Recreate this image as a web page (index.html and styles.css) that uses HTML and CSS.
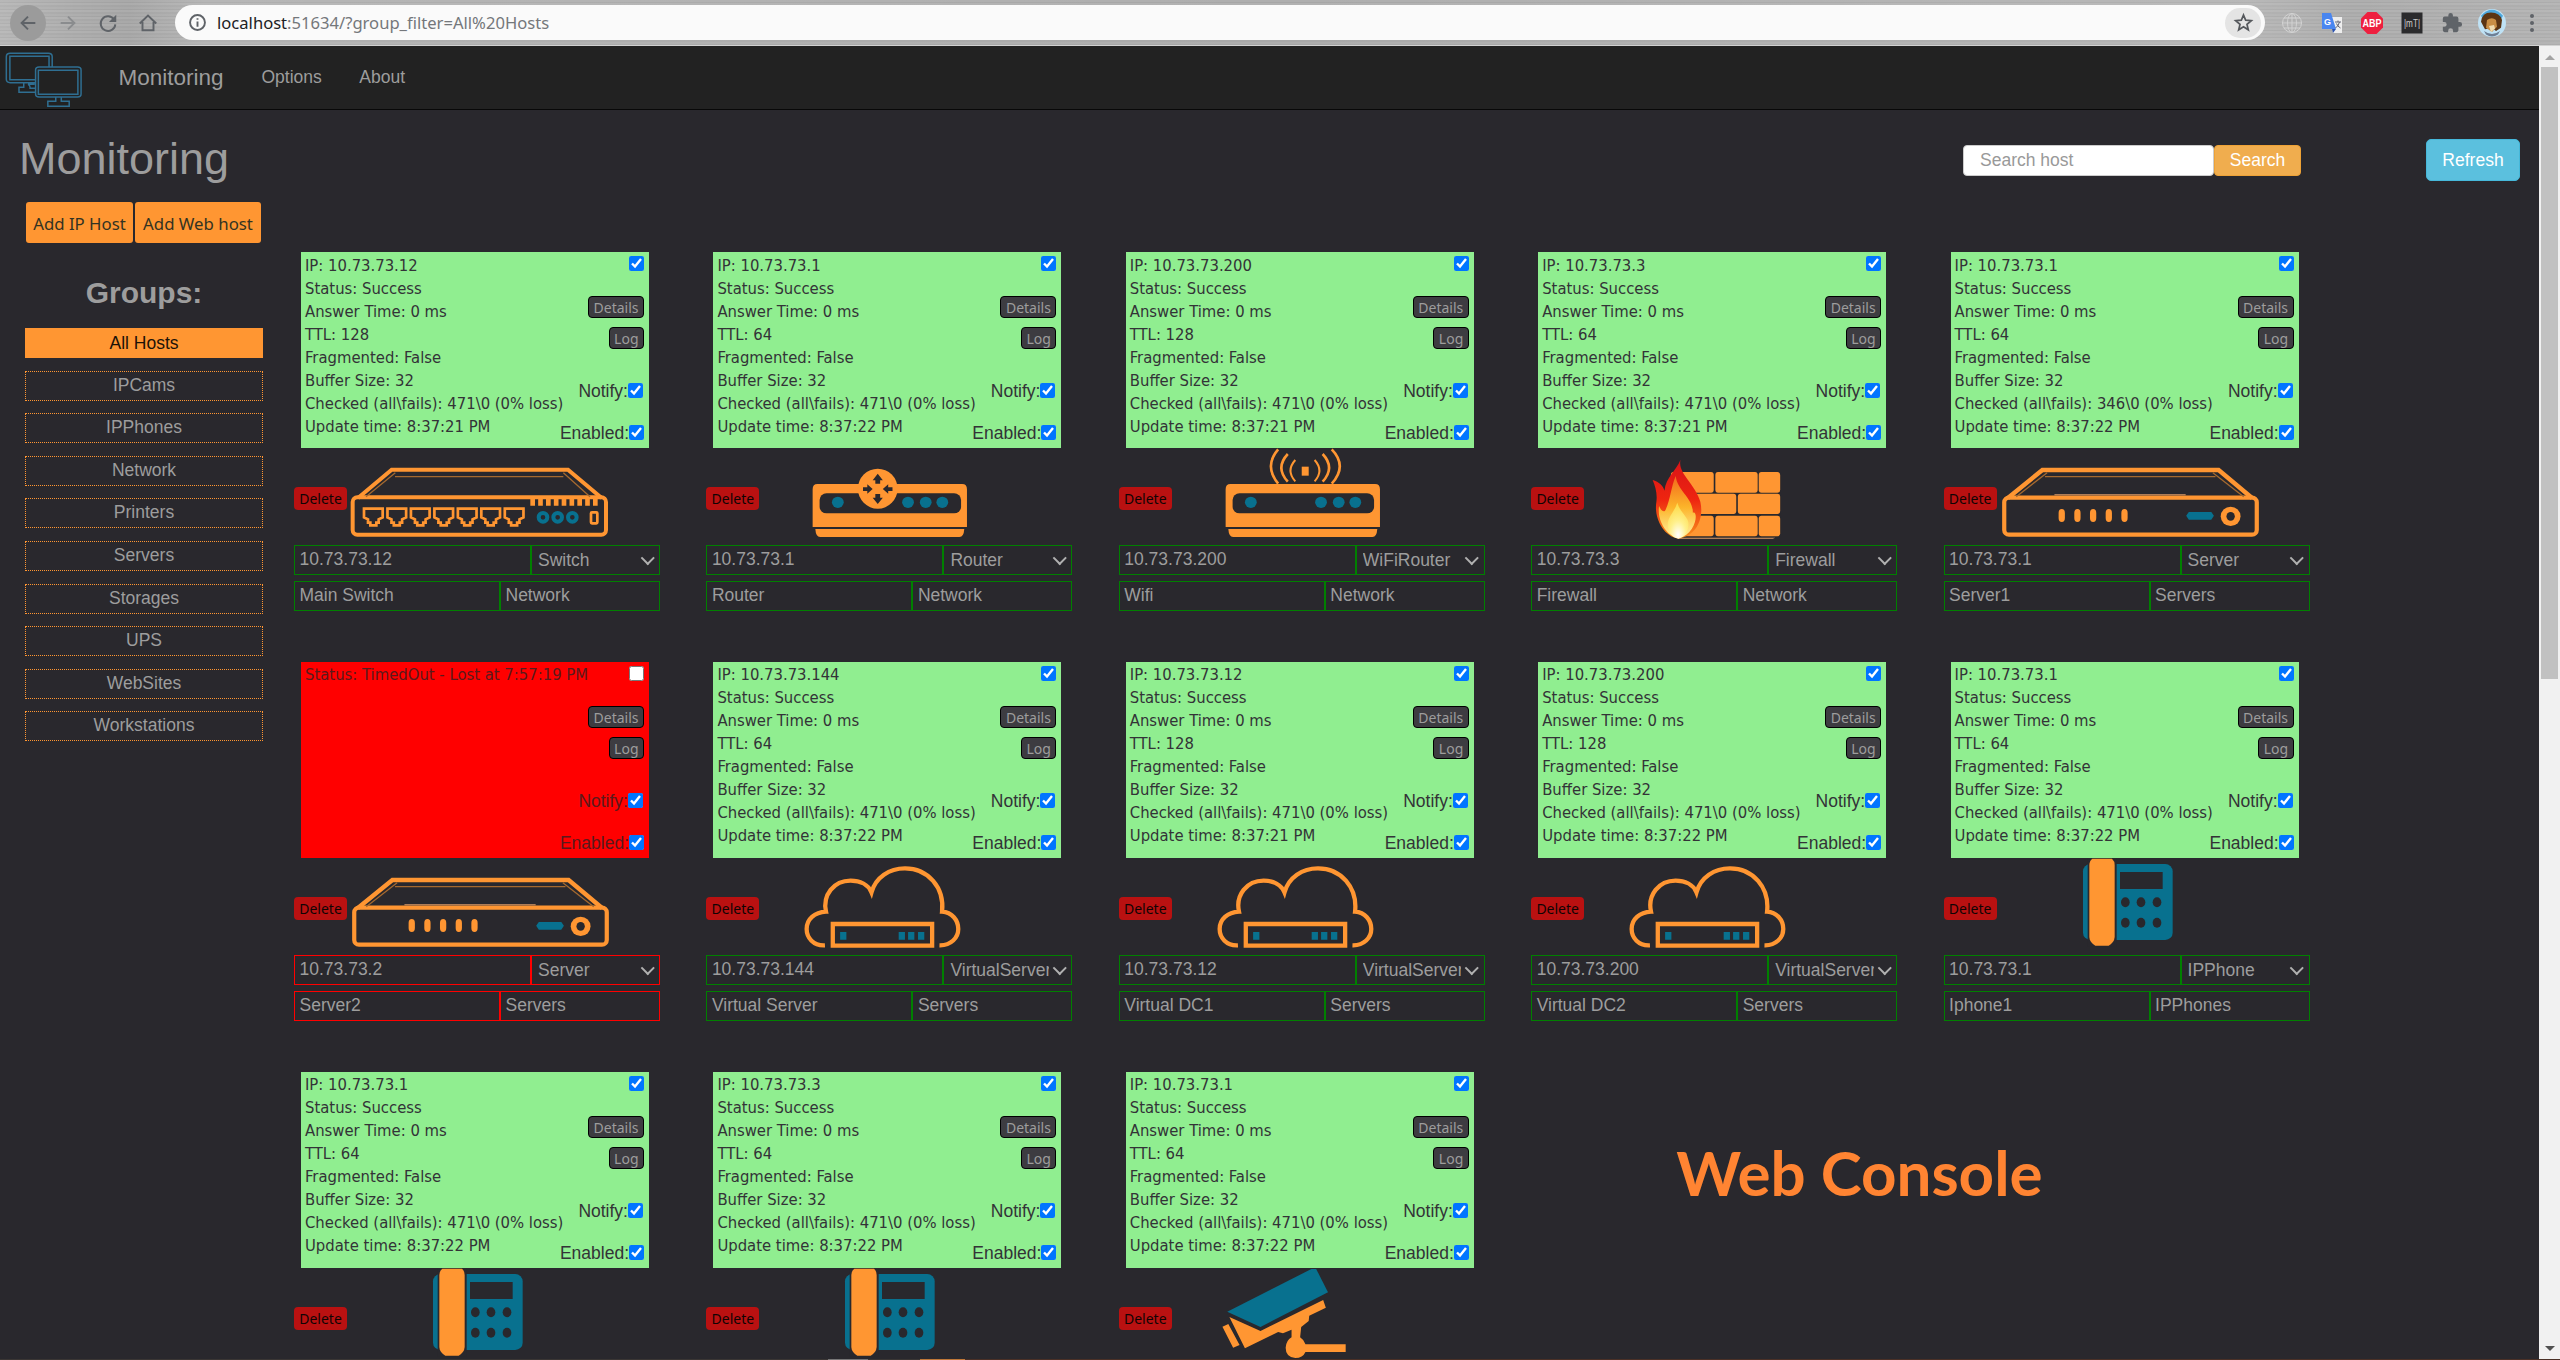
FILE: index.html
```html
<!DOCTYPE html>
<html lang="en">
<head>
<meta charset="utf-8">
<title>Monitoring</title>
<link rel="stylesheet" href="styles.css">
</head>
<body>
<svg class="sprite" width="0" height="0" aria-hidden="true">
  <defs>
    <linearGradient id="flame-outer" x1="0" y1="0" x2="0" y2="1"><stop offset="0" stop-color="#d81418"/><stop offset=".5" stop-color="#ee2410"/><stop offset="1" stop-color="#f8921c"/></linearGradient>
    <linearGradient id="flame-inner" x1="0" y1="0" x2="0" y2="1"><stop offset="0" stop-color="#f2691c"/><stop offset=".5" stop-color="#fcb42a"/><stop offset="1" stop-color="#fff2a0"/></linearGradient>
    <radialGradient id="flame-core" cx=".5" cy=".9" r=".8"><stop offset="0" stop-color="#fff"/><stop offset=".5" stop-color="#fff08a"/><stop offset="1" stop-color="#fddc50"/></radialGradient>
  </defs>
  <symbol id="i-switch" viewBox="42 654 1098 291" preserveAspectRatio="none">
    <g class="ln">
      <path d="M234 804 335 719H864L965 804" stroke-width="4"/>
      <rect x="218" y="802" width="760" height="112" rx="14" stroke-width="4"/>
      <path class="thin" d="M258 800 346 728M345 740H850M850 728 930 800"/>
      <path d="M751 817H957" stroke-width="6.5" stroke-dasharray="14 9.5" class="teeth"/>
      <g stroke-width="2.7">
        <path id="port" d="M252 836H308V862L296 868V878H289V886H271V878H264V868L252 862Z"/>
        <use href="#port" x="70.4"/><use href="#port" x="140.8"/><use href="#port" x="211.2"/><use href="#port" x="281.6"/><use href="#port" x="352"/><use href="#port" x="422.4"/>
        <rect x="933" y="847" width="19" height="33" rx="3"/>
      </g>
      <g class="teal-ln" stroke-width="4"><circle cx="789" cy="862" r="13"/><circle cx="833" cy="862" r="13"/><circle cx="877" cy="862" r="13"/></g>
    </g>
  </symbol>
  <symbol id="i-server" viewBox="26.8 654 700 291" preserveAspectRatio="none">
    <g class="ln">
      <path d="M149 804 215 720H552L616 804" stroke-width="4.4"/>
      <rect x="142" y="803" width="483" height="111" rx="9" ry="14" stroke-width="4.2"/>
      <path class="thin" d="M165 800 224 728M220 740H546M541 728 600 800"/>
    </g>
    <path class="pale" d="M238 793H489V796H238Z"/>
    <g class="or"><rect x="246" y="837" width="12" height="39" rx="6" ry="12"/><rect x="276" y="837" width="12" height="39" rx="6" ry="12"/><rect x="306" y="837" width="12" height="39" rx="6" ry="12"/><rect x="336" y="837" width="12" height="39" rx="6" ry="12"/><rect x="366" y="837" width="12" height="39" rx="6" ry="12"/><ellipse cx="575" cy="859" rx="19" ry="29"/></g>
    <ellipse class="bg" cx="575" cy="859" rx="8" ry="13"/>
    <path class="tl" d="M490 857 495 846H538L543 857 538 869H495Z"/>
  </symbol>
  <symbol id="i-base" viewBox="30 54 683 291" preserveAspectRatio="none">
    <path class="or" d="M229 178Q229 162 238 162H508Q517 162 517 178V291H229ZM234 297H512Q511 321 503 321H243Q235 321 234 297Z"/>
    <rect class="bg" x="242" y="190" width="264" height="60" rx="13" ry="20"/>
    <g class="tl"><ellipse cx="276" cy="217" rx="11" ry="17"/><ellipse cx="407" cy="217" rx="11" ry="17"/><ellipse cx="440" cy="217" rx="11" ry="17"/><ellipse cx="471" cy="217" rx="11" ry="17"/></g>
  </symbol>
  <symbol id="i-router" viewBox="30 54 683 291" preserveAspectRatio="none">
    <use href="#i-base" x="30" y="54" width="683" height="291"/>
    <ellipse class="or" cx="350.500" cy="176" rx="37" ry="60"/>
    <path class="bg" d="M350.500 131 360 151H355V161H346V151H341ZM350.500 222 360 203H355V192H346V203H341ZM341 177 331 163V172H323V183H331V191ZM360 177 370 163V172H378V183H370V191Z"/>
  </symbol>
  <symbol id="i-wifi" viewBox="30 54 683 291" preserveAspectRatio="none">
    <use href="#i-base" x="30" y="54" width="683" height="291"/>
    <rect class="or" x="371" y="110" width="13" height="27"/>
    <g class="ln" stroke-width="2.600"><path d="M327 58Q300 108 327 161M427 58Q457 108 427 161"/><path d="M345 72Q321 113 345 155M410 72Q434 113 410 155"/><path d="M359 90Q341 122 359 154M395 90Q413 122 395 154" stroke-width="2"/></g>
  </symbol>
  <symbol id="i-firewall" viewBox="39 54 683 291" preserveAspectRatio="none">
    <g class="or"><rect x="300" y="126" width="80" height="62" rx="5" ry="9"/><rect x="383" y="126" width="79" height="62" rx="5" ry="9"/><rect x="464" y="126" width="40" height="62" rx="5" ry="9"/><rect x="330" y="191" width="92" height="61" rx="5" ry="9"/><rect x="425" y="191" width="79" height="61" rx="5" ry="9"/><rect x="320" y="257" width="60" height="62" rx="5" ry="9"/><rect x="383" y="257" width="79" height="62" rx="5" ry="9"/><rect x="464" y="257" width="40" height="62" rx="5" ry="9"/></g>
    <path class="pale" d="M314 323.500H495L490 326H314Z"/>
    <path fill="url(#flame-outer)" d="M318 89C312 130 345 160 355 215C362 265 348 318 314 326C285 318 268 262 273 215C275 190 271 170 266 150C278 156 286 168 288 182C291 140 310 122 318 89Z"/>
    <path fill="url(#flame-inner)" d="M309 138C312 182 342 205 341 248C352 240 348 312 314 325C290 316 274 268 278 228C282 244 288 248 290 240C300 205 300 172 309 138Z"/>
    <path fill="url(#flame-core)" d="M312 218C318 250 334 262 333 284C332 306 324 322 314 326C302 322 294 304 294 284C294 262 306 248 312 218Z"/>
  </symbol>
  <symbol id="i-cloud" viewBox="815.5 654 700 291" preserveAspectRatio="none">
    <g class="ln" stroke-width="4.300"><path d="M1043 916C1021 918 1008 893 1008 867C1008 838 1023 817 1045 815C1038 765 1060 722 1092 722C1110 722 1126 734 1132 757C1140 712 1166 685 1196 685C1240 685 1272 742 1267 815C1286 817 1298 840 1298 867C1298 893 1284 917 1262 916"/><rect x="1058" y="852" width="190" height="65"/></g>
    <path class="tl" d="M1072 876H1084V899H1072ZM1184 876H1196V899H1184ZM1202 876H1214V899H1202ZM1221 876H1233V899H1221Z"/>
  </symbol>
  <symbol id="i-phone" viewBox="42 111 1098 291" preserveAspectRatio="none">
    <rect class="tl" x="459" y="129" width="269" height="228" rx="22"/>
    <path class="bg" d="M473 111H560V376H473Z"/>
    <path class="or" d="M487 113H546Q554 120 554 132V348Q553 364 536 374H496Q479 364 478 348V132Q478 120 487 113Z"/>
    <g class="bg"><rect x="570" y="153" width="128" height="51"/><ellipse cx="586" cy="244" rx="13" ry="15"/><ellipse cx="633" cy="244" rx="13" ry="15"/><ellipse cx="681" cy="244" rx="13" ry="15"/><ellipse cx="586" cy="305" rx="13" ry="15"/><ellipse cx="633" cy="305" rx="13" ry="15"/><ellipse cx="681" cy="305" rx="13" ry="15"/></g>
  </symbol>
  <symbol id="i-camera" viewBox="801 111 683 291" preserveAspectRatio="none">
    <path class="tl" d="M1003 242 1160 114H1169L1191 184 1065 288Z"/>
    <path class="or" d="M1007 258 1065 300 1182 207 1187 230 1156 254 1155 270 1141 288 1139 319Q1146 326 1149 340H1224V363H1149Q1144 381 1130 381Q1112 378 1112 350Q1113 328 1123 319V296L1107 307 1098 303 1036 352ZM994 287 1005 279 1026 342 1014 350Z"/>
  </symbol>
</svg>

<header class="browser">
  <nav class="tools">
    <span class="tool active"><svg viewBox="0 0 24 24"><path d="M20 12H5M12 5 5 12l7 7"/></svg></span>
    <span class="tool off"><svg viewBox="0 0 24 24"><path d="M4 12h15M12 5l7 7-7 7"/></svg></span>
    <span class="tool"><svg viewBox="0 0 24 24"><path d="M18.500 8A8 8 0 1 0 20 13.500"/><path class="solid" d="M21 3v8h-8z"/></svg></span>
    <span class="tool"><svg viewBox="0 0 24 24"><path d="M3 12.500 12 4l9 8.500M6 11v9h12v-9"/></svg></span>
  </nav>
  <div class="omnibox">
    <svg class="info" viewBox="0 0 16 16"><circle cx="8" cy="8" r="7"/><path d="M8 7v5M8 4v1.500"/></svg>
    <span class="url"><b>localhost</b>:51634/?group_filter=All%20Hosts</span>
    <span class="star"><svg viewBox="0 0 24 24"><path d="m12 3.500 2.500 5.900 6.400.500-4.900 4.200 1.500 6.300-5.500-3.400-5.500 3.400L8 14.100 3.100 9.900l6.400-.500z"/></svg></span>
  </div>
  <div class="extensions">
    <svg class="globe" viewBox="0 0 22 22"><circle cx="11" cy="11" r="9.500"/><ellipse cx="11" cy="11" rx="4.500" ry="9.500"/><path d="M11 1v20M1 11h20M3 6h16M3 16h16"/></svg>
    <svg viewBox="0 0 22 22"><path fill="#eee" d="M9 5h12v16H12z"/><path fill="#4a86f0" d="M1 1h9l5 16H1z"/><path fill="#2b52b0" d="m11 17h4l-3 4z"/><text x="3" y="13" font-size="9" font-weight="700" fill="#fff">G</text><path d="M14 10h6M17 8.500v1.500M18.500 10q-1 4-4 6M15.500 11.500q1 3 4 4.500" stroke="#667" fill="none"/></svg>
    <svg viewBox="0 0 22 22"><path fill="#ee1f3f" d="M6.500 0h9L22 6.500v9L15.500 22h-9L0 15.500v-9z"/><text x="1.500" y="15" font-size="10.500" font-weight="700" fill="#fff" textLength="19" lengthAdjust="spacingAndGlyphs">ABP</text></svg>
    <svg viewBox="0 0 22 22"><path fill="#2b2b2d" d="M.5.500H21.500V21.500H.5z"/><text x="3" y="14.500" font-size="10" fill="#ccc" textLength="16" lengthAdjust="spacingAndGlyphs">|mT|</text></svg>
    <svg viewBox="0 0 24 24"><path fill="#5f6368" d="M20.500 11H19V7a2 2 0 0 0-2-2h-4V3.500a2.500 2.500 0 0 0-5 0V5H4a2 2 0 0 0-2 2v3.800h1.500a2.700 2.700 0 0 1 0 5.400H2V20a2 2 0 0 0 2 2h3.800v-1.500a2.700 2.700 0 0 1 5.400 0V22H17a2 2 0 0 0 2-2v-4h1.500a2.500 2.500 0 0 0 0-5z"/></svg>
    <svg class="avatar" viewBox="0 0 28 33" preserveAspectRatio="none"><ellipse cx="14" cy="16.500" rx="14" ry="16.500" fill="#bfe2f5"/><path fill="#4ea7dc" d="M3 8Q14-6 25 8l-3 6H6z"/><path fill="#5b3514" d="M3 15Q4 4 13 4q9 0 11 9l-1 9-5 4-4-4-7 2z"/><path fill="#c98e45" d="M9 13q5-4 9 0l1 8-5 6-6-5z"/><path fill="#f0dcb0" d="m11 20 5-1 1 4-4 4z"/><path fill="#6e7f95" d="M6 26q8 7 16 0l-2 4q-6 5-12 0z"/></svg>
    <svg viewBox="0 0 22 22"><g fill="#5f6368"><circle cx="11" cy="4" r="2"/><circle cx="11" cy="11" r="2"/><circle cx="11" cy="18" r="2"/></g></svg>
  </div>
</header>

<div class="viewport">
<div class="page">
  <nav class="navbar">
    <svg class="logo" viewBox="0 138 227.6 189" preserveAspectRatio="none">
      <path d="M90 248H26Q16 248 16 238V170Q16 160 26 160H122Q132 160 132 170V201M90 239H25V169H124V201M60 248V262H48V277H90M88 253H71Q76 256 76 262V265H90"/>
      <rect x="90" y="201" width="115" height="90" rx="9"/><rect x="97" y="211" width="100" height="72"/>
      <path d="M141 291V304H121V319H175V304H155V291"/>
    </svg>
    <a class="brand">Monitoring</a><a class="navlink">Options</a><a class="navlink">About</a>
  </nav>

  <div class="titlebar">
    <h1>Monitoring</h1>
    <form class="search"><span class="field">Search host</span><span class="go">Search</span></form>
    <span class="refresh">Refresh</span>
  </div>

  <div class="content">
    <aside class="sidebar">
      <div class="adders"><span class="add">Add IP Host</span><span class="add">Add Web host</span></div>
      <h2>Groups:</h2>
      <ul class="groups">
        <li class="current">All Hosts</li><li>IPCams</li><li>IPPhones</li><li>Network</li><li>Printers</li><li>Servers</li><li>Storages</li><li>UPS</li><li>WebSites</li><li>Workstations</li>
      </ul>
    </aside>

    <main class="hosts">
      <article class="host">
        <div class="status">
          <div class="facts"><p>IP: 10.73.73.12</p><p>Status: Success</p><p>Answer Time: 0 ms</p><p>TTL: 128</p><p>Fragmented: False</p><p>Buffer Size: 32</p><p>Checked (all\fails): 471\0 (0% loss)</p><p>Update time: 8:37:21 PM</p></div>
          <div class="controls"><input type="checkbox" checked><span class="btn">Details</span><span class="btn">Log</span><label class="notify">Notify:<input type="checkbox" checked></label><label class="enabled">Enabled:<input type="checkbox" checked></label></div>
        </div>
        <div class="device"><svg><use href="#i-switch"/></svg><span class="delete">Delete</span></div>
        <div class="fields"><span class="addr">10.73.73.12</span><span class="kind"><i>Switch</i></span></div>
        <div class="fields"><span class="name">Main Switch</span><span class="group">Network</span></div>
      </article>
      <article class="host">
        <div class="status">
          <div class="facts"><p>IP: 10.73.73.1</p><p>Status: Success</p><p>Answer Time: 0 ms</p><p>TTL: 64</p><p>Fragmented: False</p><p>Buffer Size: 32</p><p>Checked (all\fails): 471\0 (0% loss)</p><p>Update time: 8:37:22 PM</p></div>
          <div class="controls"><input type="checkbox" checked><span class="btn">Details</span><span class="btn">Log</span><label class="notify">Notify:<input type="checkbox" checked></label><label class="enabled">Enabled:<input type="checkbox" checked></label></div>
        </div>
        <div class="device"><svg><use href="#i-router"/></svg><span class="delete">Delete</span></div>
        <div class="fields"><span class="addr">10.73.73.1</span><span class="kind"><i>Router</i></span></div>
        <div class="fields"><span class="name">Router</span><span class="group">Network</span></div>
      </article>
      <article class="host">
        <div class="status">
          <div class="facts"><p>IP: 10.73.73.200</p><p>Status: Success</p><p>Answer Time: 0 ms</p><p>TTL: 128</p><p>Fragmented: False</p><p>Buffer Size: 32</p><p>Checked (all\fails): 471\0 (0% loss)</p><p>Update time: 8:37:21 PM</p></div>
          <div class="controls"><input type="checkbox" checked><span class="btn">Details</span><span class="btn">Log</span><label class="notify">Notify:<input type="checkbox" checked></label><label class="enabled">Enabled:<input type="checkbox" checked></label></div>
        </div>
        <div class="device"><svg><use href="#i-wifi"/></svg><span class="delete">Delete</span></div>
        <div class="fields"><span class="addr">10.73.73.200</span><span class="kind"><i>WiFiRouter</i></span></div>
        <div class="fields"><span class="name">Wifi</span><span class="group">Network</span></div>
      </article>
      <article class="host">
        <div class="status">
          <div class="facts"><p>IP: 10.73.73.3</p><p>Status: Success</p><p>Answer Time: 0 ms</p><p>TTL: 64</p><p>Fragmented: False</p><p>Buffer Size: 32</p><p>Checked (all\fails): 471\0 (0% loss)</p><p>Update time: 8:37:21 PM</p></div>
          <div class="controls"><input type="checkbox" checked><span class="btn">Details</span><span class="btn">Log</span><label class="notify">Notify:<input type="checkbox" checked></label><label class="enabled">Enabled:<input type="checkbox" checked></label></div>
        </div>
        <div class="device"><svg><use href="#i-firewall"/></svg><span class="delete">Delete</span></div>
        <div class="fields"><span class="addr">10.73.73.3</span><span class="kind"><i>Firewall</i></span></div>
        <div class="fields"><span class="name">Firewall</span><span class="group">Network</span></div>
      </article>
      <article class="host">
        <div class="status">
          <div class="facts"><p>IP: 10.73.73.1</p><p>Status: Success</p><p>Answer Time: 0 ms</p><p>TTL: 64</p><p>Fragmented: False</p><p>Buffer Size: 32</p><p>Checked (all\fails): 346\0 (0% loss)</p><p>Update time: 8:37:22 PM</p></div>
          <div class="controls"><input type="checkbox" checked><span class="btn">Details</span><span class="btn">Log</span><label class="notify">Notify:<input type="checkbox" checked></label><label class="enabled">Enabled:<input type="checkbox" checked></label></div>
        </div>
        <div class="device"><svg><use href="#i-server"/></svg><span class="delete">Delete</span></div>
        <div class="fields"><span class="addr">10.73.73.1</span><span class="kind"><i>Server</i></span></div>
        <div class="fields"><span class="name">Server1</span><span class="group">Servers</span></div>
      </article>

      <article class="host down">
        <div class="status">
          <div class="facts"><p>Status: TimedOut - Lost at 7:57:19 PM</p></div>
          <div class="controls"><input type="checkbox"><span class="btn">Details</span><span class="btn">Log</span><label class="notify">Notify:<input type="checkbox" checked></label><label class="enabled">Enabled:<input type="checkbox" checked></label></div>
        </div>
        <div class="device"><svg><use href="#i-server"/></svg><span class="delete">Delete</span></div>
        <div class="fields"><span class="addr">10.73.73.2</span><span class="kind"><i>Server</i></span></div>
        <div class="fields"><span class="name">Server2</span><span class="group">Servers</span></div>
      </article>
      <article class="host">
        <div class="status">
          <div class="facts"><p>IP: 10.73.73.144</p><p>Status: Success</p><p>Answer Time: 0 ms</p><p>TTL: 64</p><p>Fragmented: False</p><p>Buffer Size: 32</p><p>Checked (all\fails): 471\0 (0% loss)</p><p>Update time: 8:37:22 PM</p></div>
          <div class="controls"><input type="checkbox" checked><span class="btn">Details</span><span class="btn">Log</span><label class="notify">Notify:<input type="checkbox" checked></label><label class="enabled">Enabled:<input type="checkbox" checked></label></div>
        </div>
        <div class="device"><svg><use href="#i-cloud"/></svg><span class="delete">Delete</span></div>
        <div class="fields"><span class="addr">10.73.73.144</span><span class="kind"><i>VirtualServer</i></span></div>
        <div class="fields"><span class="name">Virtual Server</span><span class="group">Servers</span></div>
      </article>
      <article class="host">
        <div class="status">
          <div class="facts"><p>IP: 10.73.73.12</p><p>Status: Success</p><p>Answer Time: 0 ms</p><p>TTL: 128</p><p>Fragmented: False</p><p>Buffer Size: 32</p><p>Checked (all\fails): 471\0 (0% loss)</p><p>Update time: 8:37:21 PM</p></div>
          <div class="controls"><input type="checkbox" checked><span class="btn">Details</span><span class="btn">Log</span><label class="notify">Notify:<input type="checkbox" checked></label><label class="enabled">Enabled:<input type="checkbox" checked></label></div>
        </div>
        <div class="device"><svg><use href="#i-cloud"/></svg><span class="delete">Delete</span></div>
        <div class="fields"><span class="addr">10.73.73.12</span><span class="kind"><i>VirtualServer</i></span></div>
        <div class="fields"><span class="name">Virtual DC1</span><span class="group">Servers</span></div>
      </article>
      <article class="host">
        <div class="status">
          <div class="facts"><p>IP: 10.73.73.200</p><p>Status: Success</p><p>Answer Time: 0 ms</p><p>TTL: 128</p><p>Fragmented: False</p><p>Buffer Size: 32</p><p>Checked (all\fails): 471\0 (0% loss)</p><p>Update time: 8:37:22 PM</p></div>
          <div class="controls"><input type="checkbox" checked><span class="btn">Details</span><span class="btn">Log</span><label class="notify">Notify:<input type="checkbox" checked></label><label class="enabled">Enabled:<input type="checkbox" checked></label></div>
        </div>
        <div class="device"><svg><use href="#i-cloud"/></svg><span class="delete">Delete</span></div>
        <div class="fields"><span class="addr">10.73.73.200</span><span class="kind"><i>VirtualServer</i></span></div>
        <div class="fields"><span class="name">Virtual DC2</span><span class="group">Servers</span></div>
      </article>
      <article class="host">
        <div class="status">
          <div class="facts"><p>IP: 10.73.73.1</p><p>Status: Success</p><p>Answer Time: 0 ms</p><p>TTL: 64</p><p>Fragmented: False</p><p>Buffer Size: 32</p><p>Checked (all\fails): 471\0 (0% loss)</p><p>Update time: 8:37:22 PM</p></div>
          <div class="controls"><input type="checkbox" checked><span class="btn">Details</span><span class="btn">Log</span><label class="notify">Notify:<input type="checkbox" checked></label><label class="enabled">Enabled:<input type="checkbox" checked></label></div>
        </div>
        <div class="device"><svg><use href="#i-phone"/></svg><span class="delete">Delete</span></div>
        <div class="fields"><span class="addr">10.73.73.1</span><span class="kind"><i>IPPhone</i></span></div>
        <div class="fields"><span class="name">Iphone1</span><span class="group">IPPhones</span></div>
      </article>

      <article class="host">
        <div class="status">
          <div class="facts"><p>IP: 10.73.73.1</p><p>Status: Success</p><p>Answer Time: 0 ms</p><p>TTL: 64</p><p>Fragmented: False</p><p>Buffer Size: 32</p><p>Checked (all\fails): 471\0 (0% loss)</p><p>Update time: 8:37:22 PM</p></div>
          <div class="controls"><input type="checkbox" checked><span class="btn">Details</span><span class="btn">Log</span><label class="notify">Notify:<input type="checkbox" checked></label><label class="enabled">Enabled:<input type="checkbox" checked></label></div>
        </div>
        <div class="device"><svg><use href="#i-phone"/></svg><span class="delete">Delete</span></div>
      </article>
      <article class="host">
        <div class="status">
          <div class="facts"><p>IP: 10.73.73.3</p><p>Status: Success</p><p>Answer Time: 0 ms</p><p>TTL: 64</p><p>Fragmented: False</p><p>Buffer Size: 32</p><p>Checked (all\fails): 471\0 (0% loss)</p><p>Update time: 8:37:22 PM</p></div>
          <div class="controls"><input type="checkbox" checked><span class="btn">Details</span><span class="btn">Log</span><label class="notify">Notify:<input type="checkbox" checked></label><label class="enabled">Enabled:<input type="checkbox" checked></label></div>
        </div>
        <div class="device"><svg><use href="#i-phone"/></svg><span class="delete">Delete</span></div>
      </article>
      <article class="host">
        <div class="status">
          <div class="facts"><p>IP: 10.73.73.1</p><p>Status: Success</p><p>Answer Time: 0 ms</p><p>TTL: 64</p><p>Fragmented: False</p><p>Buffer Size: 32</p><p>Checked (all\fails): 471\0 (0% loss)</p><p>Update time: 8:37:22 PM</p></div>
          <div class="controls"><input type="checkbox" checked><span class="btn">Details</span><span class="btn">Log</span><label class="notify">Notify:<input type="checkbox" checked></label><label class="enabled">Enabled:<input type="checkbox" checked></label></div>
        </div>
        <div class="device"><svg><use href="#i-camera"/></svg><span class="delete">Delete</span></div>
      </article>
      <div class="caption">Web Console</div>
    </main>
  </div>
</div>
<div class="scrollbar"><i class="up"></i><i class="thumb"></i><i class="down-arrow"></i></div>
</div>
<footer class="edge"></footer>
</body>
</html>
```
FILE: styles.css
```css
* { box-sizing: border-box; }
html, body { margin: 0; height: 1360px; overflow: hidden; }
body {
  display: flex; flex-direction: column;
  background: #29282d; color: #9d9d9d;
  font: 17.5px/25px "Liberation Sans", Arial, sans-serif;
}
p, h1, h2, ul { margin: 0; padding: 0; }
.sprite { position: absolute; }
.ln { fill: none; stroke: #ff9632; }
.ln path, .ln rect, .ln circle { vector-effect: non-scaling-stroke; }
.ln .thin { stroke: #a5692f; stroke-width: 1.3; }
.teal-ln { stroke: #08718f; }
.or { fill: #ff9632; }
.tl { fill: #08718f; }
.bg { fill: #29282d; }
.pale { fill: #dd9a66; }
.ln .teeth { vector-effect: none; stroke-width: 21; }

/* Browser toolbar */
.browser {
  flex: none; height: 46px; display: flex; align-items: flex-start;
  padding: 5px 0 0 9.5px; border-bottom: 1px solid #d2d2d2;
  background:
    linear-gradient(90deg, rgba(255,255,255,.12), transparent 3%, rgba(0,0,0,.03) 5%, rgba(255,255,255,.1) 8%, transparent 50%, rgba(255,255,255,.12) 88%, transparent 92%, rgba(255,255,255,.08)),
    repeating-linear-gradient(180deg, #aeaeae 0 2px, #a6a6a6 2px 3px, #b1b1b1 3px 5px, #a9a9a9 5px 7px);
}
.tools { display: flex; gap: 4px; width: 165.5px; }
.tool { width: 36px; height: 36px; border-radius: 50%; display: grid; place-items: center; }
.tool.active { background: #9b9b9b; }
.tool svg { width: 22px; height: 22px; fill: none; stroke: #5f6368; stroke-width: 2.1; }
.tool.off svg { stroke: #8a8c8e; }
.tool svg .solid { fill: #5f6368; stroke: none; }
.omnibox {
  width: 2090px; height: 35px; border-radius: 18px; background: #fafafa;
  display: flex; align-items: center; padding: 0 4px 0 14px;
}
.info { width: 17px; height: 17px; fill: none; stroke: #5f6368; stroke-width: 1.8; }
.url { flex: 1; margin-left: 11px; font: 16.6px/35px "Noto Sans", sans-serif; color: #74777b; }
.url b { font-weight: 400; color: #202124; }
.star { width: 36px; height: 30px; border-radius: 16px; background: #e4e4e4; display: grid; place-items: center; }
.star svg { width: 21px; height: 21px; fill: none; stroke: #55585c; stroke-width: 2; }
.extensions { display: flex; align-items: center; height: 35px; gap: 18px; margin-left: 16px; font-family: "Liberation Sans", Arial, sans-serif; }
.extensions svg { width: 22px; height: 22px; }
.extensions .globe { fill: none; stroke: #d2d2d2; stroke-width: 1; }
.extensions .avatar { width: 28px; height: 28px; margin: 0 -3px; }

.viewport { flex: 1; min-height: 0; display: flex; overflow: hidden; }
.page { flex: 1; min-width: 0; }

/* Site navigation */
.navbar {
  height: 64px; display: flex; align-items: center; background: #222;
  border-bottom: 1px solid #080808;
}
.logo { width: 90px; height: 63px; fill: none; stroke: #2f6f92; stroke-width: 1.5; }
.logo * { vector-effect: non-scaling-stroke; }
.brand { width: 143px; margin-left: 28.5px; font-size: 22.5px; }
.navlink { margin-right: 37.5px; }

/* Title row */
.titlebar { display: flex; height: 90px; padding: 0 19px 0 19px; }
h1 { font-size: 45px; font-weight: 400; line-height: 50px; padding-top: 24px; width: 1944px; }
.search { display: flex; margin-top: 35px; height: 31px; line-height: 29px; }
.field { width: 251px; padding-left: 16px; background: #fff; color: #999; border: 1px solid #ccc; border-radius: 4px; }
.go { width: 87px; text-align: center; background: #f0ad4e; border: 1px solid #eea236; color: #fff; border-radius: 4px; }
.refresh {
  margin: 29px 0 0 auto; width: 94px; height: 42px; line-height: 40px; text-align: center;
  color: #fff; background: #5bc0de; border: 1px solid #46b8da; border-radius: 5px;
}

/* Left column */
.content { display: flex; }
.sidebar { width: 294px; padding: 2px 0 0 25px; }
.adders { display: flex; gap: 2px; padding-left: 1px; }
.add {
  width: 107px; height: 41px; text-align: center; font: 16.8px/43px "Noto Sans", sans-serif;
  color: #333322; background: #ff9632; border-radius: 3px; white-space: nowrap;
}
.add + .add { width: 126px; }
h2 { width: 238px; margin-top: 33px; font-size: 30px; line-height: 33px; text-align: center; }
.groups { list-style: none; width: 238px; margin-top: 19px; }
.groups li {
  height: 30px; margin-bottom: 12.6px; line-height: 27px; text-align: center;
  border: 1px dotted #ff9632;
}
.groups .current { background: #ff9632; color: #1c1208; border-style: solid; line-height: 28px; }

/* Host cards */
.hosts {
  flex: none; display: grid; grid-template-columns: repeat(5, 366px);
  column-gap: 46.4px; grid-auto-rows: 359px; row-gap: 50.8px; padding-top: 52px;
}
.status {
  display: grid; width: 348px; height: 196px; margin-left: 7px;
  background: #90ee90; color: #333337;
}
.down .status { background: #f00; color: #5a1a1c; }
.facts, .controls { grid-area: 1 / 1; }
.facts { padding: 1.6px 0 0 4px; font: 16.5px/23px "DejaVu Sans Condensed", Tahoma, sans-serif; white-space: nowrap; }
.controls { display: flex; flex-direction: column; align-items: flex-end; padding: 4px 5px 0 0; }
input[type="checkbox"] { width: 15px; height: 15px; margin: 0; flex: none; }
.btn {
  height: 22px; margin-top: 9px; padding: 0 4.5px; border: 1px solid #000; border-radius: 4px;
  background: #3d3c41; color: #9d9d9d; font: 14px/21px "Noto Sans", sans-serif;
}
.controls > input + .btn { margin-top: 25px; }
.notify, .enabled { display: flex; height: 21px; line-height: 22px; }
.notify { margin: 31px 1px 0 0; }
.notify input { margin-top: 3px; }
.enabled { margin-top: 21px; }
.enabled input { margin-top: 3px; }
.device { display: grid; height: 97px; }
.device > * { grid-area: 1 / 1; }
.device svg { width: 366px; height: 97px; }
.delete {
  width: 53px; height: 23px; margin-top: 39px; border-radius: 4px; background: #b91111;
  color: #100404; text-align: center; font: 14px/23px "Noto Sans", sans-serif;
}
.fields { display: flex; height: 30px; margin-bottom: 6px; line-height: 27px; }
.fields span { border: 1px solid #008000; padding-left: 4.5px; white-space: nowrap; overflow: hidden; }
.down .fields span { border-color: #f00; }
.addr { width: 237px; }
.fields .kind { width: 129px; padding: 1px 5px 0 6px; display: flex; align-items: center; }
.kind i { flex: 1; font-style: normal; overflow: hidden; }
.kind::after {
  content: ""; flex: none; width: 7.5px; height: 7.5px; margin: -6px 2px 0 6px;
  border: solid #b0b0b0; border-width: 0 2px 2px 0; transform: rotate(45deg);
}
.name { width: 206px; }
.group { width: 160px; }
.caption {
  grid-column: 4 / span 2; padding: 63px 0 0 145px; color: #ff8432;
  font: 700 61.9px/74px Lato, sans-serif;
}

/* Scrollbar */
.scrollbar { width: 21px; background: #f1f1f1; display: flex; flex-direction: column; align-items: center; }
.up, .down-arrow { border: 5px solid transparent; }
.up { margin-top: 4px; border-bottom-color: #a3a3a3; }
.thumb { width: 17px; height: 612px; margin-top: 7px; background: #c1c1c1; }
.down-arrow { margin-top: auto; margin-bottom: 3px; border-top-color: #505050; }
.edge {
  flex: none; height: 1px;
  background: linear-gradient(90deg, #3a3634 828px, #777 828px 868px, #3a3634 868px 920px, #c07838 920px 965px, #4a3026 965px);
}
```
